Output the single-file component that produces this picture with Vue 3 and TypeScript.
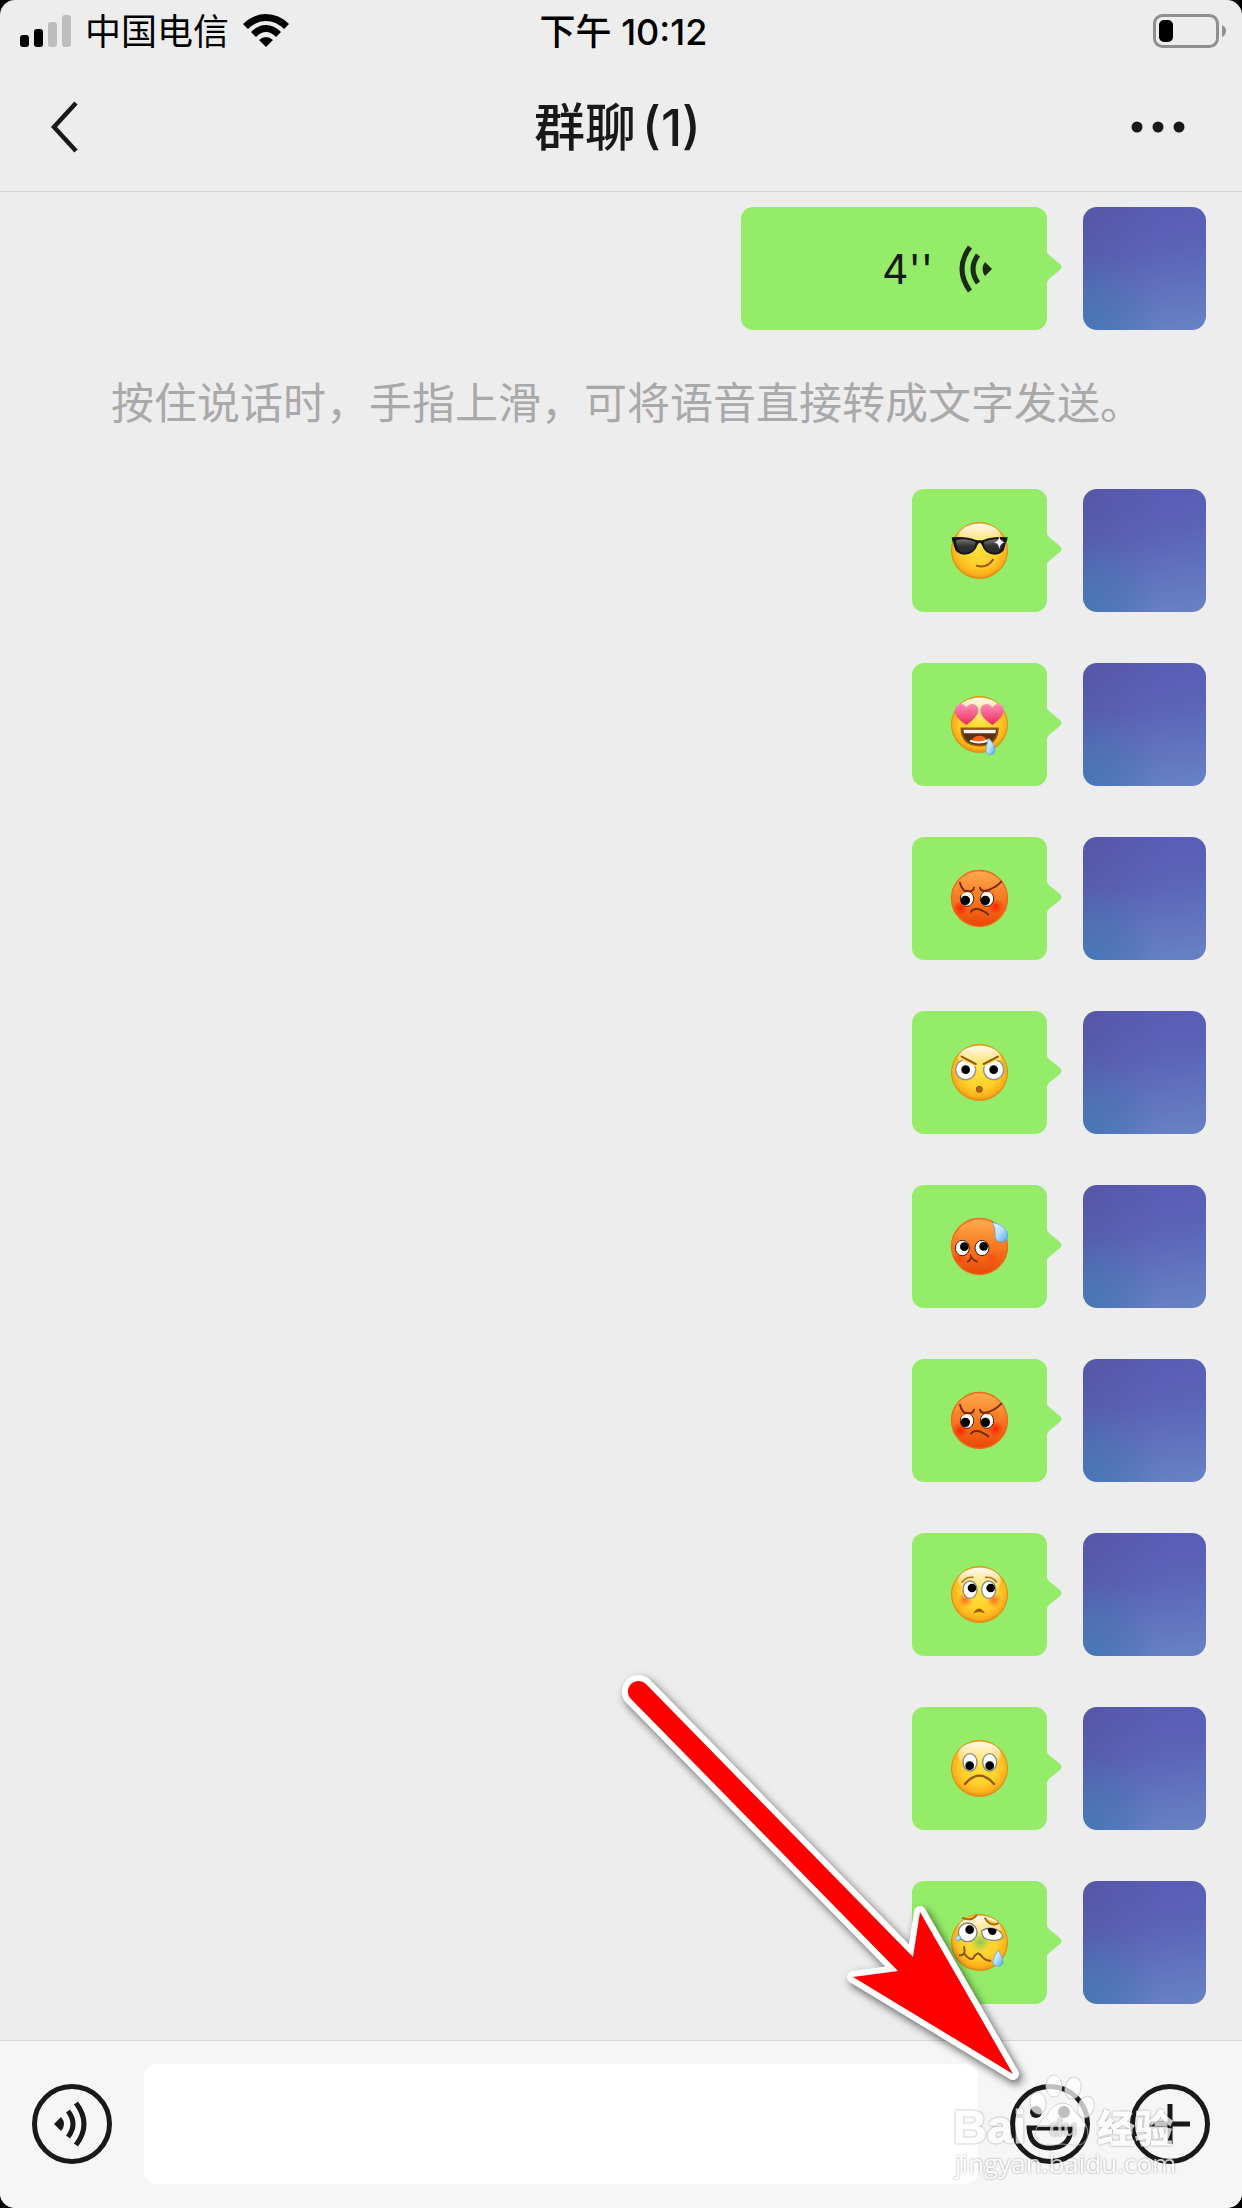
<script setup lang="ts">
type Face = 'cool' | 'drool' | 'angry' | 'stare' | 'sweat' | 'shy' | 'sad' | 'sick'

interface Message {
  id: number
  face: Face
  label: string
}

const messages: Message[] = [
  { id: 1, face: 'cool', label: '得意' },
  { id: 2, face: 'drool', label: '色' },
  { id: 3, face: 'angry', label: '发怒' },
  { id: 4, face: 'stare', label: '瞪眼' },
  { id: 5, face: 'sweat', label: '流汗' },
  { id: 6, face: 'angry', label: '发怒' },
  { id: 7, face: 'shy', label: '委屈' },
  { id: 8, face: 'sad', label: '难过' },
  { id: 9, face: 'sick', label: '难受' },
]

const isRed = (face: Face): boolean => face === 'angry' || face === 'sweat'
</script>

<template>
  <div class="phone">
    <svg class="defs" aria-hidden="true">
      <defs>
        <radialGradient id="yellow" cx="50%" cy="45%" r="55%">
          <stop offset="0" stop-color="#ffe23a" />
          <stop offset="0.6" stop-color="#ffd02c" />
          <stop offset="0.88" stop-color="#fdb01a" />
          <stop offset="1" stop-color="#e58a10" />
        </radialGradient>
        <linearGradient id="shine" x1="0" y1="0" x2="0" y2="1">
          <stop offset="0" stop-color="#fff" stop-opacity="0.95" />
          <stop offset="1" stop-color="#fff" stop-opacity="0" />
        </linearGradient>
        <linearGradient id="red" x1="0" y1="0" x2="0" y2="1">
          <stop offset="0" stop-color="#ffab50" />
          <stop offset="0.5" stop-color="#f8791f" />
          <stop offset="1" stop-color="#ea4708" />
        </linearGradient>
        <radialGradient id="blushRed">
          <stop offset="0" stop-color="#ff1a00" stop-opacity="0.9" />
          <stop offset="1" stop-color="#ff1a00" stop-opacity="0" />
        </radialGradient>
        <radialGradient id="blushOrange">
          <stop offset="0" stop-color="#ff6a1a" stop-opacity="0.95" />
          <stop offset="1" stop-color="#ff6a1a" stop-opacity="0" />
        </radialGradient>
        <radialGradient id="green">
          <stop offset="0" stop-color="#8cc850" />
          <stop offset="1" stop-color="#a8d040" stop-opacity="0" />
        </radialGradient>
        <linearGradient id="heart" x1="0" y1="0" x2="0" y2="1">
          <stop offset="0" stop-color="#ff8fb5" />
          <stop offset="1" stop-color="#e92a5c" />
        </linearGradient>
        <linearGradient id="lens" x1="0" y1="0" x2="0" y2="1">
          <stop offset="0" stop-color="#777" />
          <stop offset="0.5" stop-color="#333" />
          <stop offset="1" stop-color="#2a2a2a" />
        </linearGradient>
        <linearGradient id="drop" x1="0" y1="0" x2="1" y2="1">
          <stop offset="0" stop-color="#e8f6ff" />
          <stop offset="0.5" stop-color="#b9e0fb" />
          <stop offset="1" stop-color="#4fa4ee" />
        </linearGradient>
      </defs>
    </svg>

    <div class="status">
      <div class="carrier">
        <svg class="signal" viewBox="0 0 51 32" aria-hidden="true">
          <rect x="0" y="20" width="9" height="12" rx="3" />
          <rect x="14" y="14" width="9" height="18" rx="3" />
          <rect x="28" y="7" width="9" height="25" rx="3" fill="#bebebe" />
          <rect x="42" y="0" width="9" height="32" rx="3" fill="#bebebe" />
        </svg>
        <span>中国电信</span>
        <svg class="wifi" viewBox="0 0 46 34" aria-hidden="true">
          <path d="M0 10 Q10 0 23 0 Q36 0 46 10 L41 15 Q33 7 23 7 Q13 7 5 15Z" />
          <path d="M8 18 Q15 11 23 11 Q31 11 38 18 L33 23 Q28 18 23 18 Q18 18 13 23Z" />
          <path d="M16 26 Q23 20 30 26 L23 33Z" />
        </svg>
      </div>
      <time class="clock">下午 10:12</time>
      <svg class="battery" viewBox="0 0 74 34" role="img" aria-label="电量">
        <rect x="1.5" y="1.5" width="63" height="31" rx="8" fill="none" stroke="#8f8f8f" stroke-width="3" />
        <rect x="6" y="6" width="14" height="22" rx="5" />
        <path d="M69 11 Q73 13 73 17 Q73 21 69 23Z" fill="#8f8f8f" />
      </svg>
    </div>

    <header class="nav">
      <button class="icon-button back" aria-label="返回">
        <svg viewBox="0 0 28 52" aria-hidden="true">
          <path d="M26 2 L4 26 L26 50" fill="none" stroke="#191919" stroke-width="4.5" />
        </svg>
      </button>
      <h1>群聊<span class="count">(1)</span></h1>
      <button class="icon-button more" aria-label="更多">
        <svg viewBox="0 0 54 12" aria-hidden="true">
          <circle cx="6" cy="6" r="5.5" /><circle cx="27" cy="6" r="5.5" /><circle cx="48" cy="6" r="5.5" />
        </svg>
      </button>
    </header>

    <main class="chat">
      <div class="row">
        <button class="bubble voice">
          <span>4''</span>
          <svg viewBox="0 0 34 48" aria-hidden="true">
            <path d="M11 2 Q-5 24 11 46" fill="none" stroke="#1b2a12" stroke-width="5" />
            <path d="M19 10 Q9 24 19 38" fill="none" stroke="#1b2a12" stroke-width="5" />
            <path d="M26 17 L33 24 L26 31 Q21 24 26 17Z" fill="#1b2a12" />
          </svg>
        </button>
        <div class="avatar"></div>
      </div>

      <p class="tip">按住说话时，手指上滑，可将语音直接转成文字发送。</p>

      <div v-for="m in messages" :key="m.id" class="row">
        <div class="bubble">
          <svg class="face" viewBox="0 0 171 171" role="img" :aria-label="m.label">
            <template v-if="isRed(m.face)">
              <circle cx="85.500" cy="85.500" r="84" fill="url(#red)" stroke="#ee6a1c" stroke-width="4" />
            </template>
            <template v-else>
              <circle cx="85.500" cy="85.500" r="84" fill="url(#yellow)" stroke="#df8a14" stroke-width="3" />
              <ellipse cx="85.500" cy="44" rx="64" ry="39" fill="url(#shine)" />
            </template>

            <g v-if="m.face === 'cool'">
              <path d="M2 46 Q45 42 72 53 Q86 57 99 53 Q126 42 170 46 L168 57 Q163 62 162 72 Q158 98 132 98 Q102 98 93 70 Q90 62 86 62 Q82 62 79 70 Q70 98 40 98 Q14 98 9 72 Q8 62 4 57Z" fill="#141414" />
              <path d="M15 55 Q45 46 74 60 Q72 92 42 93 Q17 93 15 55Z" fill="url(#lens)" />
              <path d="M157 55 Q127 46 98 60 Q100 92 130 93 Q155 93 157 55Z" fill="url(#lens)" />
              <path d="M145 42 Q147 59 162 61 Q147 63 145 81 Q143 63 129 61 Q143 59 145 42Z" fill="#fff" />
              <path d="M77 131 Q108 140 126 113" fill="none" stroke="#96580a" stroke-width="6" stroke-linecap="round" />
            </g>

            <g v-else-if="m.face === 'drool'">
              <path d="M46 87 Q10 64 11 43 Q14 24 30 24 Q42 25 46 36 Q50 25 64 24 Q81 25 82 43 Q81 64 46 87Z" fill="url(#heart)" />
              <path d="M124 87 Q88 64 88 43 Q91 24 107 24 Q119 25 124 36 Q128 25 141 24 Q158 25 159 43 Q158 64 124 87Z" fill="url(#heart)" />
              <path d="M31 97 H141 Q140 149 86 149 Q32 149 31 97Z" fill="#60300a" stroke="#955808" stroke-width="5" />
              <path d="M37 101 H135 L133 112 H39Z" fill="#f3f3f3" />
              <path d="M62 133 Q70 119 85 119 Q102 119 108 133 Q87 142 62 133Z" fill="#f96419" />
              <path d="M57 134 Q85 146 114 132" fill="none" stroke="#fff" stroke-width="6" />
              <path d="M114 127 Q132 145 132 164 Q130 176 118 176 Q105 175 105 162 Q106 143 114 127Z" fill="url(#drop)" stroke="#4b9ee2" stroke-width="2" />
            </g>

            <g v-else-if="m.face === 'angry'">
              <circle cx="28" cy="115" r="23" fill="url(#blushRed)" /><circle cx="134" cy="110" r="23" fill="url(#blushRed)" />
              <g fill="#fff" stroke="#4a1c08" stroke-width="3">
                <ellipse cx="48" cy="86" rx="20" ry="23" /><ellipse cx="108" cy="86" rx="20" ry="23" />
              </g>
              <circle cx="43" cy="91" r="14" /><circle cx="103" cy="91" r="14" />
              <path d="M22 55 Q45 76 70 59 L72 68 Q48 62 30 74Z M86 60 Q107 75 132 60 L128 72 Q108 62 88 69Z" fill="#f8791f" />
              <path d="M27 38 Q34 65 49 63 Q67 66 69 53 M87 53 Q90 65 104 62 Q130 57 151 35 M60 125 Q74 106 112 133" fill="none" stroke="#742a05" stroke-width="6" stroke-linecap="round" />
            </g>

            <g v-else-if="m.face === 'stare'">
              <g fill="#fff" stroke="#929292" stroke-width="4">
                <circle cx="44" cy="77" r="30" /><circle cx="128" cy="77" r="30" />
              </g>
              <circle cx="44" cy="77" r="13" /><circle cx="128" cy="77" r="13" />
              <path d="M26 32 L82 61 L78 70 L20 42Z M146 32 L91 61 L95 70 L152 42Z" fill="#ffe25c" />
              <path d="M32 38 L74 60 M98 60 L141 38" stroke="#96580a" stroke-width="6" stroke-linecap="round" />
              <circle cx="85" cy="136" r="9" fill="#b8630b" stroke="#8a4908" stroke-width="3" />
            </g>

            <g v-else-if="m.face === 'sweat'">
              <circle cx="26" cy="120" r="20" fill="url(#blushRed)" opacity="0.4" /><circle cx="122" cy="120" r="20" fill="url(#blushRed)" opacity="0.3" />
              <g fill="#fff" stroke="#4a1c08" stroke-width="3">
                <ellipse cx="34" cy="90" rx="21" ry="23" /><ellipse cx="93" cy="90" rx="21" ry="23" />
              </g>
              <circle cx="40" cy="86" r="13" /><circle cx="98" cy="85" r="13" />
              <path d="M50 131 Q60 126 60 116 Q67 128 78 131" fill="none" stroke="#742a05" stroke-width="5" stroke-linecap="round" />
              <path d="M123 13 Q170 23 170 54 Q168 72 150 72 Q133 71 132 50 Q135 29 123 13Z" fill="url(#drop)" stroke="#4b9ee2" stroke-width="2" />
            </g>

            <g v-else-if="m.face === 'shy'">
              <circle cx="42" cy="102" r="22" fill="url(#blushOrange)" /><circle cx="129" cy="102" r="22" fill="url(#blushOrange)" />
              <g fill="#fff" stroke="#8b8b82" stroke-width="4">
                <ellipse cx="57" cy="71" rx="21" ry="26" /><ellipse cx="113" cy="71" rx="21" ry="26" />
              </g>
              <circle cx="63" cy="66" r="13" /><circle cx="119" cy="66" r="13" />
              <path d="M34 48 Q46 32 66 34 M104 34 Q125 32 136 48" fill="none" stroke="#b1731c" stroke-width="5" stroke-linecap="round" />
              <path d="M68 140 Q84 117 100 140 Q84 133 68 140Z" fill="#96580a" stroke="#96580a" stroke-width="2" />
            </g>

            <g v-else-if="m.face === 'sad'">
              <g fill="#fff" stroke="#8b8b82" stroke-width="4">
                <ellipse cx="57" cy="67" rx="21" ry="26" /><ellipse cx="116" cy="67" rx="21" ry="26" />
              </g>
              <circle cx="56" cy="77" r="13" /><circle cx="116" cy="77" r="13" />
              <path d="M42 132 Q85 82 129 132" fill="none" stroke="#96580a" stroke-width="7" stroke-linecap="round" />
            </g>

            <g v-else>
              <circle cx="88" cy="84" r="34" fill="url(#green)" />
              <g fill="#fff" stroke="#85857c" stroke-width="4">
                <circle cx="50" cy="55" r="28" />
                <path d="M92 51 Q103 41 124 43 Q150 46 156 68 Q149 80 128 79 Q91 79 92 51Z" />
              </g>
              <circle cx="56" cy="47" r="13" /><path d="M110 43 Q124 39 137 47 Q137 62 124 63 Q111 62 110 43Z" />
              <path d="M36 12 Q62 23 76 4 M102 13 Q118 39 141 28" fill="#ffce38" stroke="#ad6810" stroke-width="6" stroke-linecap="round" />
              <path d="M26 124 Q46 124 39 99 M42 121 Q56 139 66 134 Q71 122 80 118 Q88 120 95 130 Q104 140 118 140" fill="none" stroke="#8c5209" stroke-width="6" stroke-linecap="round" stroke-linejoin="round" />
              <circle cx="22" cy="73" r="8" fill="url(#drop)" stroke="#4b9ee2" stroke-width="2" />
              <path d="M141 108 Q156 130 156 143 Q154 157 141 157 Q126 156 126 143 Q127 128 141 108Z" fill="url(#drop)" stroke="#4b9ee2" stroke-width="2" />
            </g>
          </svg>
        </div>
        <div class="avatar"></div>
      </div>
    </main>

    <footer class="composer">
      <button class="icon-button" aria-label="语音输入">
        <svg viewBox="0 0 80 80" aria-hidden="true" fill="none" stroke="#191919" stroke-width="5">
          <circle cx="40" cy="40" r="37.500" />
          <path d="M36 27 Q46 40 36 53 M44 19 Q60 40 44 61" />
          <path d="M22 40 L29 33 Q35 40 29 47Z" fill="#191919" stroke="none" />
        </svg>
      </button>
      <input class="entry" type="text" aria-label="消息" />
      <button class="icon-button" aria-label="表情">
        <svg viewBox="0 0 80 80" aria-hidden="true" fill="none" stroke="#191919" stroke-width="5">
          <circle cx="40" cy="40" r="37.500" />
          <circle cx="26" cy="28" r="6" fill="#191919" stroke="none" />
          <circle cx="54" cy="28" r="6" fill="#191919" stroke="none" />
          <path d="M19 44 H61 Q60 64 40 64 Q20 64 19 44Z" />
        </svg>
      </button>
      <button class="icon-button" aria-label="更多功能">
        <svg viewBox="0 0 80 80" aria-hidden="true" fill="none" stroke="#191919" stroke-width="5">
          <circle cx="40" cy="40" r="37.500" />
          <path d="M40 20 V60 M20 40 H60" />
        </svg>
      </button>

      <svg class="watermark" viewBox="0 0 230 120" role="img" aria-label="Baidu 经验 jingyan.baidu.com">
        <g fill="#fff" fill-opacity="0.72" stroke="#c4c4c4" stroke-opacity="0.7" stroke-width="1">
          <ellipse cx="104" cy="16" rx="8" ry="11" />
          <ellipse cx="123" cy="18" rx="8" ry="11" transform="rotate(12 123 18)" />
          <ellipse cx="88" cy="33" rx="8" ry="11" transform="rotate(-8 88 33)" />
          <ellipse cx="136" cy="37" rx="8" ry="11" transform="rotate(20 136 37)" />
          <path d="M87 57 Q90 51 97 45 Q103 34 112 33 Q121 33 126 43 Q133 49 136 57Z" stroke="none" />
          <path d="M112 33 Q121 33 126 43 Q139 54 138 66 Q135 77 122 75 Q112 73 102 75 Q87 77 85 65 Q85 55 97 45 Q103 34 112 33Z" fill="none" />
        </g>
        <g class="letters">
          <text x="3" y="73" class="brand">Bai</text>
          <text x="99" y="66" class="du">du</text>
          <text x="147" y="72" class="brand-cn">经验</text>
          <text x="5" y="103" class="site">jingyan.baidu.com</text>
        </g>
      </svg>

      <svg class="pointer" viewBox="620 1670 410 420" aria-hidden="true">
        <path d="M631 1699 A10.500 10.500 0 0 1 646 1684 L913 1957 L920 1912 L1013 2074 L853 1977 L898 1971Z" fill="#fff" stroke="#fff" stroke-width="12" stroke-linejoin="round" />
        <path d="M631 1699 A10.500 10.500 0 0 1 646 1684 L913 1957 L920 1912 L1013 2074 L853 1977 L898 1971Z" fill="#f00" />
      </svg>
    </footer>
  </div>
</template>

<style>
body {
  background: #000;
}
</style>

<style scoped>
.phone {
  display: flex;
  flex-direction: column;
  min-height: 100vh;
  overflow: hidden;
  border-radius: 15px;
  background: #ededed;
  color: #191919;
  font-family: Inter, "Noto Sans CJK SC", sans-serif;
}
.defs {
  position: absolute;
  width: 0;
  height: 0;
}
.status {
  display: grid;
  grid-template-columns: 1fr auto 1fr;
  align-items: center;
  height: 60px;
  padding: 0 15px 0 20px;
  color: #000;
  font-size: 36px;
  line-height: 60px;
}
.carrier {
  display: flex;
  align-items: center;
  gap: 14px;
}
.carrier span,
.clock {
  padding-top: 2px;
}
.signal {
  width: 51px;
  height: 32px;
}
.wifi {
  width: 46px;
  height: 34px;
}
.clock {
  font-weight: 500;
}
.battery {
  justify-self: end;
  width: 74px;
  height: 34px;
}
.nav {
  display: grid;
  grid-template-columns: 1fr auto 1fr;
  align-items: center;
  height: 132px;
  box-sizing: border-box;
  padding: 2px 57px 0 50px;
  border-bottom: 1px solid #d5d5d5;
}
.nav h1 {
  margin: 0;
  padding-top: 2px;
  font-size: 51px;
  font-weight: 500;
  line-height: 72px;
}
.count {
  margin-left: 6px;
}
.icon-button {
  display: block;
  flex: none;
  padding: 0;
  border: 0;
  background: none;
}
.icon-button svg {
  display: block;
  width: 80px;
  height: 80px;
}
.back svg {
  width: 28px;
  height: 52px;
}
.more {
  justify-self: end;
}
.more svg {
  width: 54px;
  height: 12px;
  fill: #191919;
}
.chat {
  display: flex;
  flex: 1;
  flex-direction: column;
  gap: 51px;
  padding: 15px 36px 36px;
}
.row {
  display: flex;
  justify-content: flex-end;
  gap: 36px;
}
.bubble {
  position: relative;
  display: flex;
  align-items: center;
  justify-content: center;
  box-sizing: border-box;
  width: 135px;
  height: 123px;
  border: 0;
  border-radius: 12px;
  background: #95ec69;
}
.bubble::after {
  content: "";
  position: absolute;
  top: 43px;
  right: -15px;
  width: 16px;
  height: 34px;
  background: #95ec69;
  clip-path: path("M0 0 Q1 3 3 5 L14 14 Q17 17 14 20 L3 29 Q1 31 0 34Z");
}
.voice {
  justify-content: flex-end;
  gap: 26px;
  width: 306px;
  padding: 0 54px 0 0;
  color: #191919;
  font: 41px Inter, sans-serif;
}
.voice svg {
  width: 34px;
  height: 48px;
}
.avatar {
  width: 123px;
  height: 123px;
  border-radius: 14px;
  background:
    radial-gradient(circle at 0 100%, rgba(67, 121, 184, 0.9) 0, rgba(67, 121, 184, 0) 45%),
    linear-gradient(100deg, rgba(80, 80, 150, 0.4) 0%, rgba(80, 80, 200, 0) 60%),
    linear-gradient(172deg, #595bb4 0%, #5b64b9 40%, #6882c4 100%);
}
.face {
  width: 57px;
  height: 57px;
  overflow: visible;
}
.tip {
  margin: -15px 0 3px;
  padding-left: 75px;
  color: #a9a9a9;
  font-family: "Noto Sans CJK SC", sans-serif;
  font-size: 43px;
  font-weight: 400;
  line-height: 69px;
  white-space: nowrap;
}
.composer {
  position: relative;
  display: flex;
  align-items: center;
  gap: 40px;
  padding: 23px 32px 24px;
  border-top: 1px solid #d9d9d9;
  background: #f6f6f6;
}
.entry {
  flex: 1;
  min-width: 0;
  height: 120px;
  margin-left: -8px;
  margin-right: -8px;
  box-sizing: border-box;
  padding: 0 24px;
  border: 0;
  border-radius: 12px;
  background: #fff;
  font-size: 48px;
}
.watermark {
  position: absolute;
  right: 62px;
  bottom: 18px;
  width: 230px;
  height: 120px;
  overflow: visible;
  pointer-events: none;
}
.letters {
  fill: #fff;
  stroke: #fff;
  stroke-width: 1px;
  opacity: 0.75;
  filter: drop-shadow(0 0 1px rgba(0, 0, 0, 0.5));
}
.brand {
  font: bold 47px "Liberation Sans", sans-serif;
}
.brand-cn {
  font: bold 38px "Noto Sans CJK SC", sans-serif;
}
.site {
  stroke: none;
  font: 26px "Open Sans", sans-serif;
}
.du {
  fill: #dcdcdc;
  stroke: none;
  font: bold 23px "Liberation Sans", sans-serif;
}
.pointer {
  position: absolute;
  right: 212px;
  bottom: 118px;
  width: 410px;
  height: 420px;
  overflow: visible;
  filter: drop-shadow(3px 4px 4px rgba(0, 0, 0, 0.6));
  pointer-events: none;
}
</style>
